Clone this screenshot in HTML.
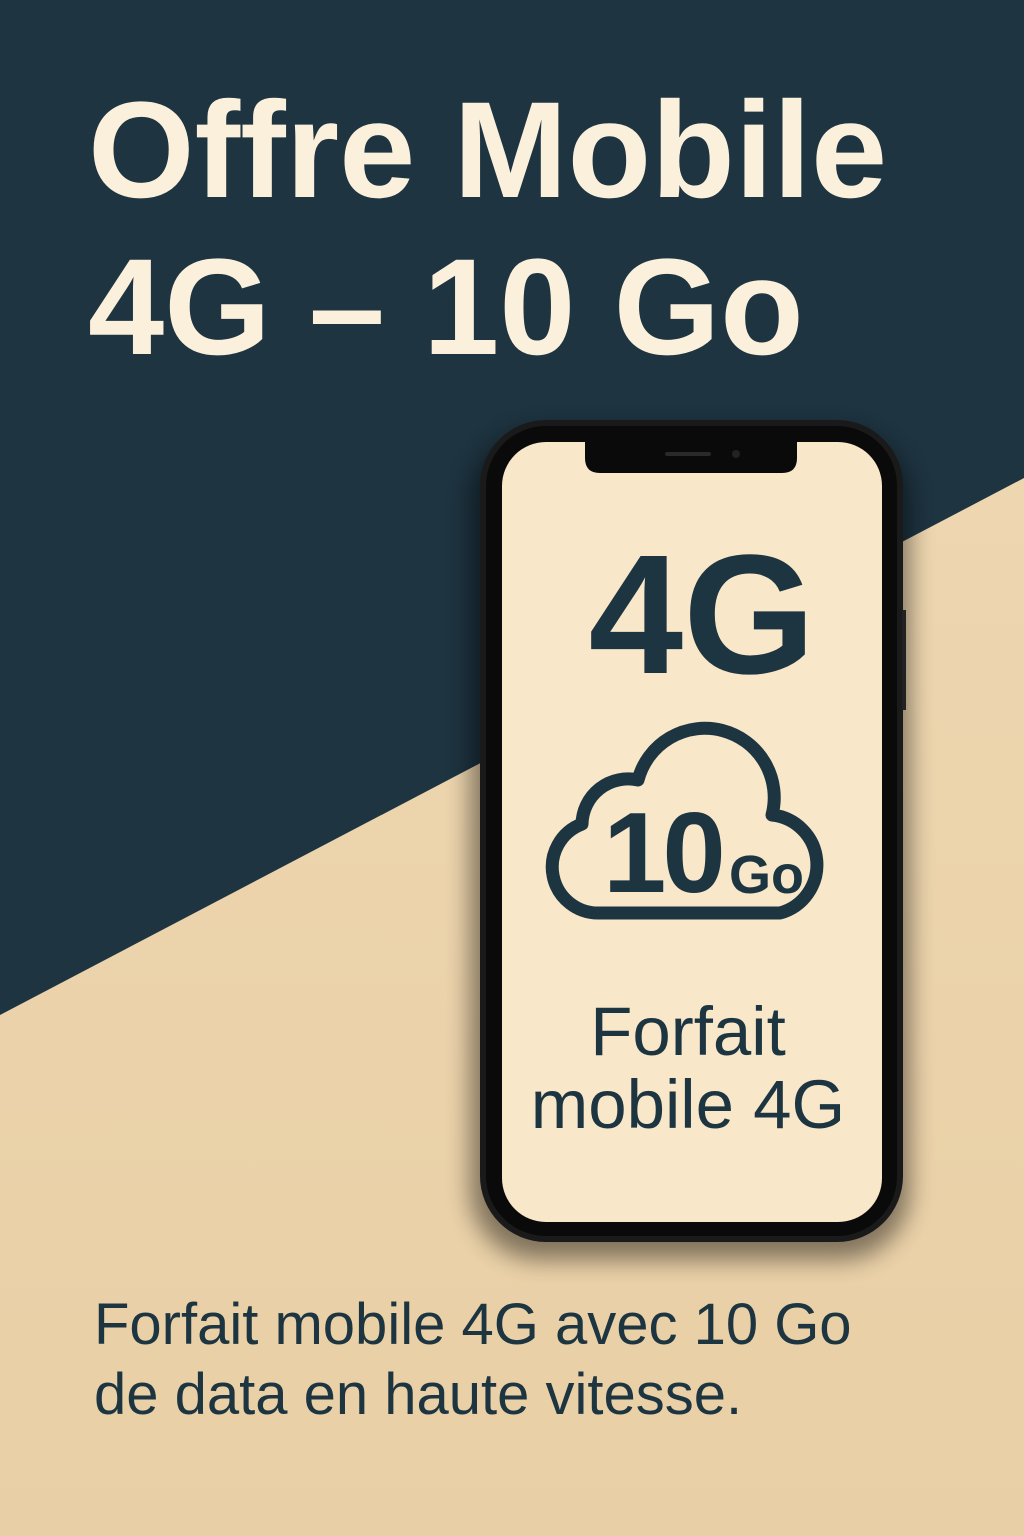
<!DOCTYPE html>
<html><head><meta charset="utf-8"><style>
html,body{margin:0;padding:0}
body{width:1024px;height:1536px;position:relative;overflow:hidden;background:#ebd2aa;font-family:"Liberation Sans",sans-serif}
.t{position:absolute;white-space:nowrap}
</style></head><body>
<svg width="1024" height="1536" style="position:absolute;left:0;top:0">
<defs>
<linearGradient id="bg" x1="0" y1="0" x2="0" y2="1"><stop offset="0" stop-color="#efd9b5"/><stop offset="1" stop-color="#e9cfa5"/></linearGradient>
<filter id="sh" x="-20%" y="-20%" width="140%" height="140%"><feGaussianBlur stdDeviation="12"/></filter>
</defs>
<rect width="1024" height="1536" fill="url(#bg)"/>
<polygon points="0,0 1024,0 1024,478 0,1015" fill="#1e3441"/>
<rect x="470" y="430" width="440" height="830" rx="70" fill="#000" opacity="0.45" filter="url(#sh)"/>
<rect x="480" y="420" width="423" height="822" rx="66" fill="#1a1a1a"/>
<rect x="486" y="426" width="411" height="810" rx="60" fill="#0a0a0a"/>
<rect x="902" y="610" width="4" height="100" fill="#222"/>
<rect x="502" y="442" width="380" height="780" rx="44" fill="#f9e7ca"/>
<path d="M585 442 L797 442 L797 458 Q797 473 782 473 L600 473 Q585 473 585 458 Z" fill="#0a0a0a"/>
<rect x="665" y="452" width="46" height="4" rx="2" fill="#2a2a2a"/>
<circle cx="736" cy="454" r="4" fill="#222"/>
<path d="M600 913 L780 913 A50 50 0 0 0 772 815 A66 66 0 0 0 638 780 A46 46 0 0 0 582 824 A46 46 0 0 0 600 913 Z" fill="none" stroke="#1d3541" stroke-width="13" stroke-linejoin="round"/>
</svg>
<div class="t" style="left:88px;top:72px;font-size:137px;font-weight:bold;color:#fbf0dc;line-height:157px">Offre Mobile<br>4G – 10 Go</div>
<div class="t" style="left:502px;width:400px;text-align:center;top:530px;font-size:170px;font-weight:bold;color:#1d3541;line-height:170px">4G</div>
<div class="t" style="left:603px;top:789px;font-size:114px;font-weight:bold;color:#1d3541;line-height:130px;letter-spacing:-4px">10</div>
<div class="t" style="left:729px;top:845px;font-size:54px;font-weight:bold;color:#1d3541;line-height:60px">Go</div>
<div class="t" style="left:502px;width:372px;text-align:center;top:995px;font-size:69px;color:#1d3541;line-height:73px">Forfait<br>mobile 4G</div>
<div class="t" style="left:94px;top:1290px;font-size:58px;color:#1d3541;line-height:70px">Forfait mobile 4G avec 10 Go<br>de data en haute vitesse.</div>
</body></html>
